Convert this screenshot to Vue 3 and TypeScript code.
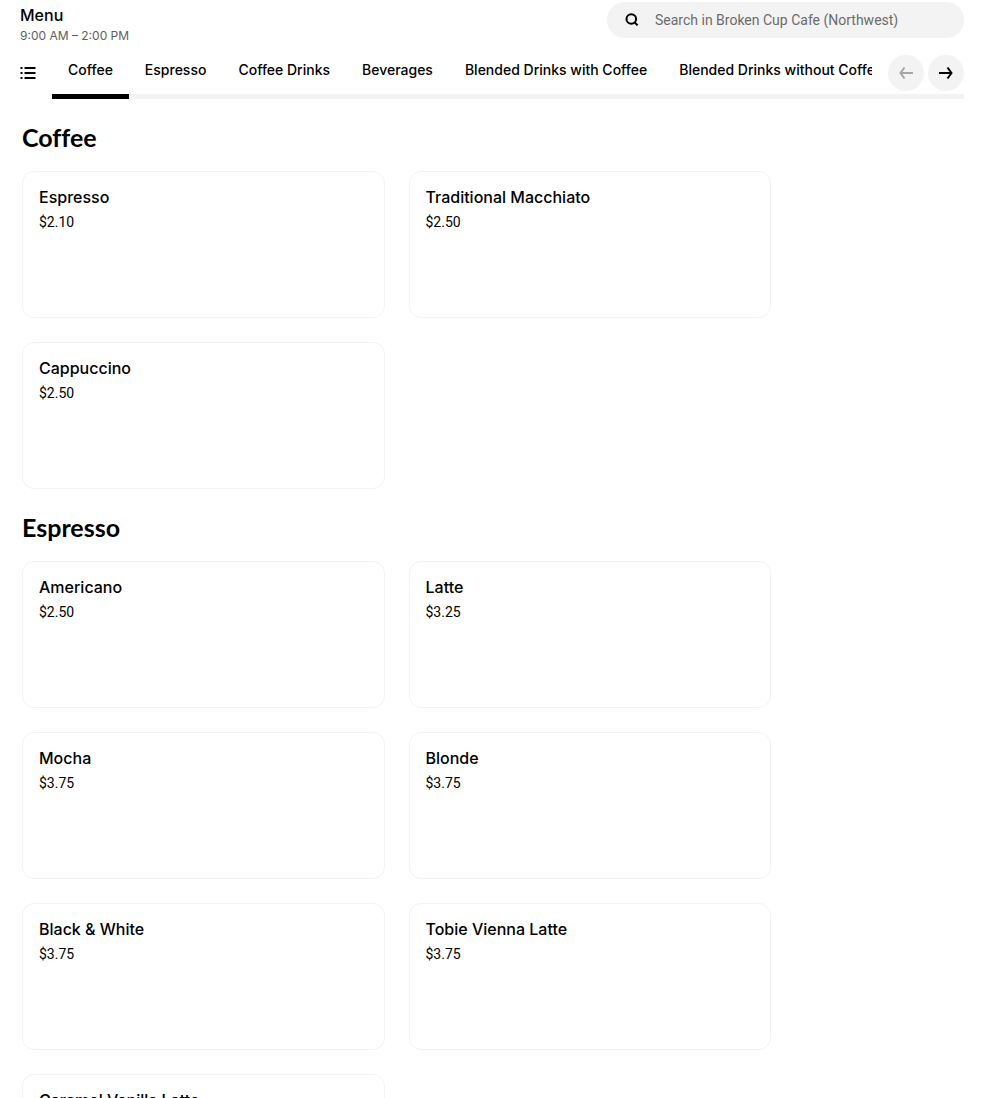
<script setup lang="ts">
import { ref } from 'vue'

interface Item {
  name: string
  price: string
}

interface Section {
  title: string
  items: Item[]
}

const tabs: string[] = [
  'Coffee',
  'Espresso',
  'Coffee Drinks',
  'Beverages',
  'Blended Drinks with Coffee',
  'Blended Drinks without Coffee',
]

const sections: Section[] = [
  {
    title: 'Coffee',
    items: [
      { name: 'Espresso', price: '$2.10' },
      { name: 'Traditional Macchiato', price: '$2.50' },
      { name: 'Cappuccino', price: '$2.50' },
    ],
  },
  {
    title: 'Espresso',
    items: [
      { name: 'Americano', price: '$2.50' },
      { name: 'Latte', price: '$3.25' },
      { name: 'Mocha', price: '$3.75' },
      { name: 'Blonde', price: '$3.75' },
      { name: 'Black & White', price: '$3.75' },
      { name: 'Tobie Vienna Latte', price: '$3.75' },
      { name: 'Caramel Vanilla Latte', price: '$3.75' },
    ],
  },
]

const active = ref<string>('Coffee')
const query = ref<string>('')
</script>

<template>
  <div class="page">
    <header class="header">
      <div class="heading">
        <h1 class="title">Menu</h1>
        <p class="hours">9:00 AM – 2:00 PM</p>
      </div>
      <label class="search">
        <svg class="search-icon" viewBox="0 0 16 16" aria-hidden="true">
          <circle cx="7.3" cy="7" r="4.8" />
          <path d="M10.600 10.400 13.600 13.400" />
        </svg>
        <input
          v-model="query"
          class="search-input"
          type="text"
          aria-label="Search in Broken Cup Cafe (Northwest)"
          placeholder="Search in Broken Cup Cafe (Northwest)"
        />
      </label>
    </header>

    <nav class="nav" aria-label="Menu categories">
      <button class="list-button" type="button" aria-label="All categories">
        <svg viewBox="0 0 16 16" aria-hidden="true">
          <path d="M0.500 3h2M0.500 8h2M0.500 13h2M4.500 3h11M4.500 8h11M4.500 13h11" />
        </svg>
      </button>
      <div class="rail">
        <div class="tabs">
          <button
            v-for="tab in tabs"
            :key="tab"
            type="button"
            class="tab"
            :class="{ active: tab === active }"
            @click="active = tab"
          >
            {{ tab }}
          </button>
        </div>
        <div class="arrows">
          <button class="arrow" type="button" aria-label="Previous" disabled>
            <svg viewBox="0 0 16 16" aria-hidden="true">
              <path d="M15 8H2.500M6.500 2.500 2.500 8 6.500 13.500" />
            </svg>
          </button>
          <button class="arrow" type="button" aria-label="Next">
            <svg viewBox="0 0 16 16" aria-hidden="true">
              <path d="M1 8h12.500M9.500 2.500 13.500 8 9.500 13.500" />
            </svg>
          </button>
        </div>
      </div>
    </nav>

    <main class="menu">
      <section v-for="section in sections" :key="section.title" class="section">
        <h2 class="section-title">{{ section.title }}</h2>
        <ul class="grid">
          <li v-for="item in section.items" :key="item.name">
            <a class="card" href="#">
              <span class="name">{{ item.name }}</span>
              <span class="price">{{ item.price }}</span>
            </a>
          </li>
        </ul>
      </section>
    </main>
  </div>
</template>

<style>
body {
  margin: 0;
  background: #fff;
}
</style>

<style scoped>
.page {
  color: #000;
  font-family: Inter, 'Liberation Sans', sans-serif;
}

.header {
  display: flex;
  justify-content: space-between;
  align-items: flex-start;
  padding: 2px 20px 0;
}

.title {
  margin: 3px 0 1px;
  font-size: 16px;
  line-height: 20px;
  font-weight: 500;
}

.hours {
  margin: 0;
  font-size: 12px;
  line-height: 20px;
  color: #5e5e5e;
}

.search {
  display: flex;
  align-items: center;
  gap: 15px;
  box-sizing: border-box;
  width: 357px;
  height: 36px;
  padding: 0 17px;
  border-radius: 18px;
  background: #f3f3f3;
}

.search-icon {
  flex: none;
  width: 16px;
  height: 16px;
  fill: none;
  stroke: #000;
  stroke-width: 2;
}

.search-input {
  flex: 1;
  min-width: 0;
  padding: 0;
  border: 0;
  outline: 0;
  background: none;
  color: #000;
  font-family: Roboto, 'Liberation Sans', sans-serif;
  font-size: 14px;
  line-height: 20px;
}

.search-input::placeholder {
  color: #6b6b6b;
  opacity: 1;
}

.nav {
  display: flex;
  margin: 4px 20px 0;
}

button {
  margin: 0;
  padding: 0;
  border: 0;
  background: none;
  color: inherit;
  font: inherit;
  cursor: pointer;
}

.list-button {
  display: flex;
  align-items: center;
  flex: none;
  width: 32px;
  height: 45px;
}

.list-button svg {
  width: 16px;
  height: 16px;
  fill: none;
  stroke: #000;
  stroke-width: 2;
}

.rail {
  display: flex;
  flex: 1;
  gap: 16px;
  min-width: 0;
  height: 49px;
  box-shadow: inset 0 -5px #f3f3f3;
}

.tabs {
  display: flex;
  flex: 1;
  min-width: 0;
  overflow: hidden;
}

.tab {
  flex: none;
  box-sizing: border-box;
  padding: 0 16px 4px;
  border-bottom: 5px solid transparent;
  font-size: 14px;
  line-height: 20px;
  font-weight: 500;
  white-space: nowrap;
}

.tab.active {
  border-bottom-color: #000;
}

.arrows {
  display: flex;
  flex: none;
  gap: 4px;
  padding-top: 5px;
}

.arrow {
  display: flex;
  align-items: center;
  justify-content: center;
  width: 36px;
  height: 36px;
  border-radius: 50%;
  background: #f3f3f3;
}

.arrow svg {
  width: 16px;
  height: 16px;
  fill: none;
  stroke: #000;
  stroke-width: 2;
}

.arrow:disabled {
  cursor: default;
}

.arrow:disabled svg {
  stroke: #a6a6a6;
}

.menu {
  margin: 0 213px 0 22px;
}

.section {
  padding-top: 22px;
}

.section-title {
  margin: 0 0 18px;
  font-family: Lato, 'Liberation Sans', sans-serif;
  font-size: 25px;
  line-height: 32px;
  font-weight: 700;
  font-variant-ligatures: none;
}

.grid {
  display: grid;
  grid-template-columns: repeat(2, minmax(0, 1fr));
  gap: 24px;
  margin: 0;
  padding: 0;
  list-style: none;
}

.card {
  display: flex;
  flex-direction: column;
  gap: 5px;
  box-sizing: border-box;
  min-height: 147px;
  padding: 15px 16px;
  border: 1px solid #f3f3f3;
  border-radius: 12px;
  color: inherit;
  text-decoration: none;
}

.name {
  font-size: 16px;
  line-height: 20px;
  font-weight: 500;
}

.price {
  font-family: Roboto, 'Liberation Sans', sans-serif;
  font-size: 14px;
  line-height: 20px;
}
</style>
